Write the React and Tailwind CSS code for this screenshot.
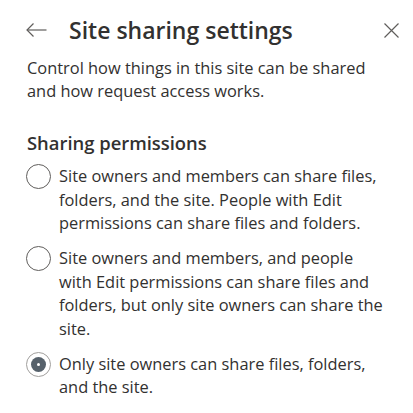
import { useState } from 'react';

const options = [
  'Site owners and members can share files, folders, and the site. People with Edit permissions can share files and folders.',
  'Site owners and members, and people with Edit permissions can share files and folders, but only site owners can share the site.',
  'Only site owners can share files, folders, and the site.',
];

const Radio = ({ checked }) => (
  <span
    className={`flex h-[25px] w-[25px] shrink-0 items-center justify-center rounded-full border bg-white ${
      checked ? 'border-[#a19f9d]' : 'border-[#605e5c]'
    }`}
  >
    {checked && (
      <span className="flex h-[15px] w-[15px] items-center justify-center rounded-full bg-[#56616b]">
        <span className="h-[3px] w-[3px] rounded-full bg-white" />
      </span>
    )}
  </span>
);

export default function App() {
  const [selected, setSelected] = useState(2);

  return (
    <div
      className="h-[413px] w-[413px] overflow-hidden bg-white text-[#323130]"
      style={{ fontFamily: '"Open Sans", "Noto Sans", sans-serif' }}
    >
      {/* Header */}
      <div className="mt-[10px] flex h-[40px] items-center pl-[26px] pr-[14px]">
        <svg width="21" height="14" viewBox="0 0 21 14" fill="none" stroke="#605e5c" strokeWidth="1.2">
          <path d="M20.5 7H1" />
          <path d="M7.5 0.5L1 7l6.5 6.5" />
        </svg>
        <h1 className="ml-[22px] flex-1 text-[23px] font-semibold leading-none">Site sharing settings</h1>
        <svg width="15" height="15" viewBox="0 0 15 15" stroke="#605e5c" strokeWidth="1.2">
          <path d="M0.5 0.5l14 14M14.5 0.5l-14 14" />
        </svg>
      </div>

      {/* Description */}
      <p className="mt-[6px] pl-[27px] pr-[27px] text-[16.4px] leading-[23px]">
        Control how things in this site can be shared and how request access works.
      </p>

      {/* Sharing permissions */}
      <h2 className="mt-[29px] pl-[27px] text-[18.4px] font-semibold leading-[24px]">Sharing permissions</h2>

      <div className="mt-[9px] flex flex-col gap-[11.5px] pl-[26px] pr-[27px]">
        {options.map((label, i) => (
          <label key={i} className="flex cursor-pointer items-start gap-[8px]" onClick={() => setSelected(i)}>
            <Radio checked={selected === i} />
            <span className="text-[16.4px] leading-[23.5px]">{label}</span>
          </label>
        ))}
      </div>
    </div>
  );
}
